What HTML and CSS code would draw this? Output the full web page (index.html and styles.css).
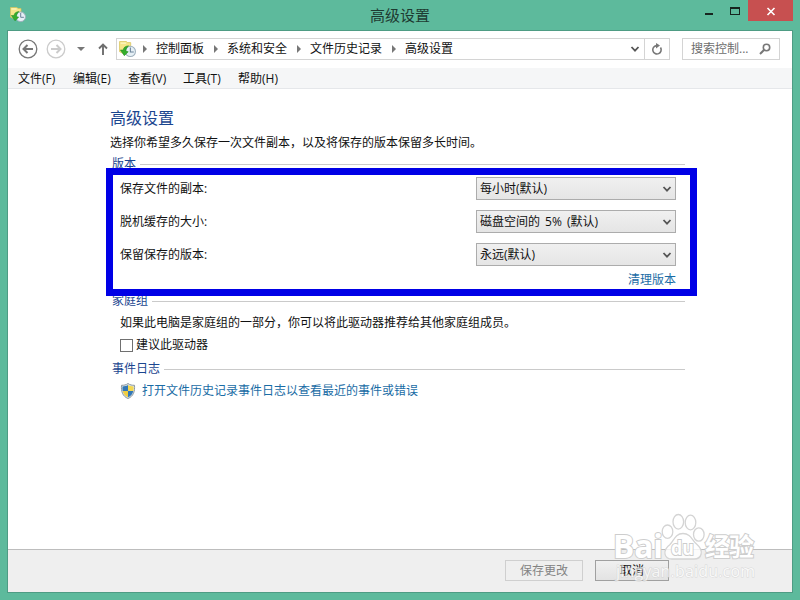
FILE: index.html
```html
<!DOCTYPE html>
<html lang="zh-CN">
<head>
  <meta charset="UTF-8">
  <meta name="viewport" content="width=device-width, initial-scale=1.0">
  <title>高级设置</title>
  <link rel="stylesheet" href="styles.css">
</head>
<body>
  <svg width="0" height="0" class="defs">
    <symbol id="history" viewBox="0 0 16 16">
      <path d="M.5.5H7l1 1h3v10H3.500l-3-1.500z" fill="#f5e68a" stroke="#d9c35c" stroke-width=".7"/>
      <path d="M1.500 1.500h5v1h-5z" fill="#fffbd0"/>
      <circle cx="10.700" cy="9.800" r="4.800" fill="#e6f0f6" stroke="#9fb0bd"/>
      <path d="M10.700 6v4.300h3.200" fill="none" stroke="#6b8299"/>
      <path d="M9 4.500C5.800 4.800 4.300 6.200 4 8.500H1.300L5 13.800l3.700-3.600-2.200-.7C6.600 7.500 7.400 6 9 4.500z" fill="#35ad2d" stroke="#1d8a1a" stroke-width=".5"/>
    </symbol>
    <symbol id="chevron" viewBox="0 0 10 8">
      <path d="M1.500 2L5 5.700 8.500 2" fill="none" stroke="currentColor" stroke-width="1.800"/>
    </symbol>
  </svg>

  <div class="window">
    <div class="titlebar">
      <svg class="app-icon"><use href="#history"/></svg>
      <div class="title">高级设置</div>
      <div class="controls">
        <span class="minimize"></span>
        <span class="maximize"></span>
        <span class="close"><svg width="10" height="9" viewBox="0 0 10 9"><path d="M1.500 1l7 7M8.500 1l-7 7" stroke="#fff" stroke-width="1.600"/></svg></span>
      </div>
    </div>

    <div class="client">
      <div class="navbar">
        <svg class="back" width="20" height="20" viewBox="0 0 20 20"><circle cx="10" cy="10" r="8.800" fill="none" stroke="currentColor" stroke-width="1.300"/><path d="M15 10H6M9.500 6L5.500 10l4 4" fill="none" stroke="currentColor" stroke-width="2"/></svg>
        <svg class="forward" width="20" height="20" viewBox="0 0 20 20"><circle cx="10" cy="10" r="8.800" fill="none" stroke="currentColor" stroke-width="1.300"/><path d="M5 10h9M10.500 6l4 4-4 4" fill="none" stroke="currentColor" stroke-width="2"/></svg>
        <svg class="recent" width="8" height="4" viewBox="0 0 8 4"><path d="M0 0h8L4 4z" fill="#777"/></svg>
        <svg class="up" width="10" height="12" viewBox="0 0 10 12"><path d="M5 12V2M1 5.500L5 1.500l4 4" fill="none" stroke="#6e6e6e" stroke-width="1.900"/></svg>
        <div class="address">
          <svg class="address-icon"><use href="#history"/></svg>
          <span class="crumb">控制面板</span>
          <span class="crumb">系统和安全</span>
          <span class="crumb">文件历史记录</span>
          <span class="crumb">高级设置</span>
          <svg class="chevron address-chevron"><use href="#chevron"/></svg>
          <span class="refresh"><svg width="12" height="13" viewBox="0 0 12 13"><path d="M9.500 4.500A4.200 4.200 0 1 1 5.500 2.600" fill="none" stroke="#777" stroke-width="1.600"/><path d="M5 0l4 2.600L5 5.500z" fill="#777"/></svg></span>
        </div>
        <div class="search">
          <span>搜索控制...</span>
          <svg width="12" height="12" viewBox="0 0 12 12"><circle cx="7.500" cy="4.500" r="3.200" fill="none" stroke="#777" stroke-width="1.600"/><path d="M5.200 6.800L1 11" stroke="#777" stroke-width="2"/></svg>
        </div>
      </div>

      <div class="menubar">
        <span>文件(F)</span>
        <span>编辑(E)</span>
        <span>查看(V)</span>
        <span>工具(T)</span>
        <span>帮助(H)</span>
      </div>

      <div class="content">
        <h1>高级设置</h1>
        <p class="intro">选择你希望多久保存一次文件副本，以及将保存的版本保留多长时间。</p>

        <div class="group-title versions-title">版本</div>
        <div class="versions">
          <div class="setting">
            <span>保存文件的副本:</span>
            <div class="select">每小时(默认)<svg class="chevron"><use href="#chevron"/></svg></div>
          </div>
          <div class="setting">
            <span>脱机缓存的大小:</span>
            <div class="select"><span class="size">磁盘空间的 5% (默认)</span><svg class="chevron"><use href="#chevron"/></svg></div>
          </div>
          <div class="setting">
            <span>保留保存的版本:</span>
            <div class="select">永远(默认)<svg class="chevron"><use href="#chevron"/></svg></div>
          </div>
          <a class="clean">清理版本</a>
          <div class="highlight"></div>
        </div>

        <div class="group-title">家庭组</div>
        <p class="homegroup">如果此电脑是家庭组的一部分，你可以将此驱动器推荐给其他家庭组成员。</p>
        <div class="recommend"><span class="checkbox"></span>建议此驱动器</div>

        <div class="group-title">事件日志</div>
        <div class="event-log">
          <svg width="16" height="16" viewBox="0 0 16 16">
            <path d="M8 .5C6 2 4 2.300 1.500 2.300c-.5 6 1 11 6.500 13.200 5.500-2.200 7-7.200 6.500-13.200C12 2.300 10 2 8 .5z" fill="#dce4e8" stroke="#8b979e"/>
            <path d="M8 2v6H2.700C2.400 6.500 2.400 5 2.500 3.400 4.500 3.400 6.500 3 8 2z" fill="#3277b5"/>
            <path d="M8 2v6h5.300c.3-1.500.3-3 .2-4.600C11.500 3.400 9.500 3 8 2z" fill="#f4d84f"/>
            <path d="M2.700 8H8v6.300C5 13 3.300 11 2.700 8z" fill="#f0cd42"/>
            <path d="M13.300 8H8v6.300c3-1.300 4.700-3.300 5.300-6.300z" fill="#3277b5"/>
          </svg>
          <a>打开文件历史记录事件日志以查看最近的事件或错误</a>
        </div>
      </div>

      <div class="footer">
        <div class="button disabled">保存更改</div>
        <div class="button cancel">取消</div>
      </div>
    </div>

    <svg class="watermark" width="150" height="72" viewBox="0 0 150 72">
      <text class="logo" x="5" y="45" textLength="50" lengthAdjust="spacingAndGlyphs">Bai</text>
      <g class="paw">
        <ellipse cx="59.500" cy="18.700" rx="5.300" ry="6.700"/>
        <ellipse cx="70.300" cy="8.800" rx="5.300" ry="7.300"/>
        <ellipse cx="82.500" cy="9.500" rx="5.300" ry="7.300"/>
        <ellipse cx="90.800" cy="21.500" rx="5.300" ry="6.700"/>
        <path d="M75 20.500c-8 0-9 7-13 11-8 6-6 14.500 2 14.500h22c8 0 10-8.500 3-14.500-5-4-6-11-14-11z"/>
      </g>
      <text class="logo-du" x="63" y="42" textLength="23" lengthAdjust="spacingAndGlyphs">du</text>
      <text class="logo-cn" x="97" y="43" textLength="49">经验</text>
      <text class="logo-url" x="8" y="64" textLength="139">jingyan.baidu.com</text>
    </svg>
  </div>
</body>
</html>
```

FILE: styles.css
```css
* {
  box-sizing: border-box;
}

body {
  margin: 0;
  background: #5dba9c;
  color: #111;
  font-family: "Open Sans", "Noto Sans CJK SC", sans-serif;
  font-size: 12px;
  line-height: 18px;
}

h1,
p {
  margin: 0;
}

.defs {
  position: absolute;
}

.window {
  position: relative;
  width: 800px;
  height: 600px;
  padding: 0 7px 7px;
  overflow: hidden;
}

.titlebar {
  display: grid;
  grid-template-columns: 120px 1fr 120px;
  height: 30px;
}

.app-icon {
  width: 16px;
  height: 16px;
  margin: 7px 0 0 3px;
}

.title {
  padding-top: 5px;
  color: #1d3a31;
  font-size: 15px;
  line-height: 20px;
  text-align: center;
}

.controls {
  display: flex;
  justify-content: flex-end;
}

.minimize {
  width: 8px;
  height: 2px;
  margin: 13px 17px 0 0;
  background: #17251f;
}

.maximize {
  width: 10px;
  height: 8px;
  margin: 7px 8px 0 0;
  border: 1px solid #17251f;
  border-top-width: 2px;
}

.close {
  display: flex;
  align-items: center;
  justify-content: center;
  width: 45px;
  height: 21px;
  padding-top: 2px;
  background: #c75050;
}

.client {
  display: flex;
  flex-direction: column;
  height: 563px;
  border: 1px solid #4e9c84;
  background: #fff;
}

.navbar {
  display: flex;
  align-items: center;
  height: 37px;
  padding: 0 12px 1px 10px;
}

.back {
  color: #777;
}

.forward {
  margin-left: 8px;
  color: #cbcbcb;
}

.recent {
  margin-left: 11px;
}

.up {
  margin-left: 13px;
}

.address {
  display: flex;
  align-items: center;
  width: 554px;
  height: 22px;
  margin-left: 8px;
  border: 1px solid #d4d4d4;
}

.address-icon {
  width: 17px;
  height: 17px;
  margin: 0 -3px 0 2px;
}

.crumb {
  display: flex;
  align-items: center;
}

.crumb::before {
  content: "";
  margin: 0 9px 0 10px;
  border: 4px solid transparent;
  border-right: 0;
  border-left-color: #777;
}

.chevron {
  width: 10px;
  height: 8px;
  color: #555;
}

.address-chevron {
  margin-left: auto;
  margin-right: 4px;
}

.refresh {
  display: flex;
  align-items: center;
  justify-content: center;
  width: 25px;
  height: 20px;
  border-left: 1px solid #d4d4d4;
}

.search {
  display: flex;
  align-items: center;
  justify-content: space-between;
  width: 98px;
  height: 22px;
  margin-left: auto;
  padding: 0 8px;
  border: 1px solid #d4d4d4;
  color: #6d6d6d;
}

.menubar {
  display: flex;
  align-items: center;
  height: 21px;
  padding: 2px 0 0 10px;
  border-bottom: 1px solid #e5e7ea;
  background: #f5f6f7;
}

.menubar span {
  width: 55px;
}

.content {
  flex: 1;
  padding: 17px 0 0 102px;
}

h1 {
  height: 26px;
  color: #1b468f;
  font-size: 16px;
  font-weight: normal;
  line-height: 24px;
}

.intro {
  height: 22px;
  padding-top: 2px;
}

.group-title {
  display: flex;
  align-items: center;
  gap: 4px;
  width: 575px;
  height: 18px;
  padding-left: 2px;
  color: #1b468f;
}

.group-title::after {
  content: "";
  flex: 1;
  height: 1px;
  background: #cacaca;
}

.versions-title {
  margin-top: 1px;
}

.versions {
  position: relative;
  height: 119px;
  width: 566px;
  padding: 4px 0 0 10px;
}

.setting {
  display: flex;
  align-items: center;
  justify-content: space-between;
  height: 23px;
  margin-bottom: 10px;
}

.select {
  display: flex;
  align-items: center;
  justify-content: space-between;
  width: 200px;
  height: 23px;
  padding: 0 3px;
  border: 1px solid #acacac;
  background: linear-gradient(#f0f0f0, #e5e5e5);
}

.size {
  word-spacing: 2px;
}

.clean {
  display: block;
  margin-top: -5px;
  text-align: right;
}

a {
  color: #1a6ca5;
}

/* frame drawn over the group titles above and below */
.highlight {
  position: absolute;
  top: -5px;
  left: -4px;
  width: 591px;
  height: 128px;
  border: 7px solid #0000e6;
}

.homegroup {
  margin: 4px 0 4px 10px;
}

.recommend {
  display: flex;
  align-items: center;
  gap: 3px;
  height: 18px;
  margin: 0 0 6px 10px;
}

.checkbox {
  width: 13px;
  height: 13px;
  border: 1px solid #707070;
}

.event-log {
  display: flex;
  align-items: center;
  gap: 6px;
  height: 18px;
  margin: 4px 0 0 10px;
}

.footer {
  display: flex;
  gap: 12px;
  height: 43px;
  padding: 10px 0 0 497px;
  border-top: 1px solid #bdbdbd;
  background: #efefef;
}

.button {
  display: flex;
  align-items: center;
  justify-content: center;
  width: 74px;
  height: 21px;
  border: 1px solid #a0a0a0;
  background: linear-gradient(#f0f0f0, #e3e3e3);
}

.disabled {
  width: 78px;
  border-color: #cfcfcf;
  background: #efefef;
  color: #838383;
}

.watermark {
  position: absolute;
  left: 608px;
  top: 513px;
}

.paw {
  fill: #fff;
  fill-opacity: 0.8;
  stroke: #d4d4d4;
  stroke-width: 1.3px;
}

.logo,
.logo-du,
.logo-cn {
  fill: #fff;
  stroke: #cdcdcd;
  stroke-width: 2px;
  paint-order: stroke;
  font-weight: bold;
}

.logo {
  font-size: 32px;
}

.logo-du {
  font-size: 20px;
}

.logo-cn {
  font-size: 25px;
}

.logo-url {
  fill: #fff;
  stroke: #ccc;
  stroke-width: 1px;
  paint-order: stroke;
  font-size: 16px;
  opacity: 0.65;
}
```
